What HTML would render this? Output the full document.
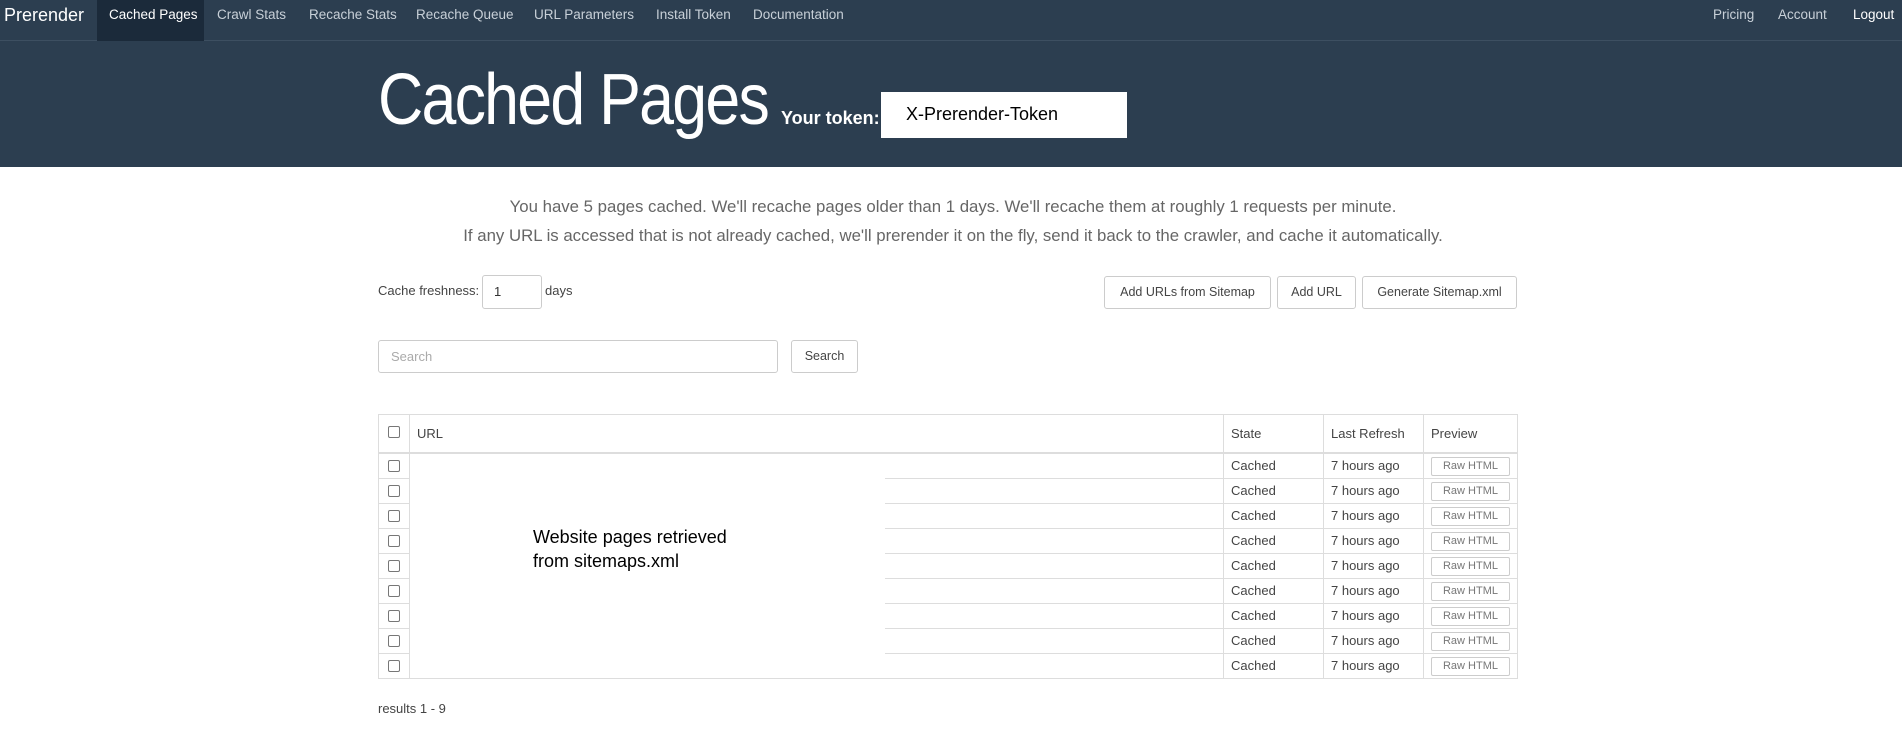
<!DOCTYPE html>
<html><head><meta charset="utf-8"><style>
*{box-sizing:border-box;margin:0;padding:0}
body{width:1902px;height:752px;background:#fff;font-family:"Liberation Sans",sans-serif;position:relative;overflow:hidden;color:#333}
.abs{position:absolute;white-space:nowrap}
.nav{position:absolute;left:0;top:0;width:1902px;height:41px;background:#2c3e50;border-bottom:1px solid #3d4f61}
.nav span{position:absolute;top:0;line-height:30px;font-size:13.5px;color:#c8d0d8}
.hero{position:absolute;left:0;top:41px;width:1902px;height:126px;background:#2c3e50}
.btn{position:absolute;border:1px solid #ccc;border-radius:3px;background:#fff;font-size:12.5px;color:#444;text-align:center;line-height:31px}
.hl{position:absolute;height:1px;background:#ddd}
.vl{position:absolute;width:1px;background:#ddd}
.cb{position:absolute;width:12px;height:12px;border:1px solid #777;border-radius:2px;background:#fff}
.cell{position:absolute;font-size:13px;color:#444;line-height:25px}
.raw{position:absolute;width:79px;height:19px;border:1px solid #ccc;border-radius:2px;font-size:11px;color:#777;text-align:center;line-height:17px}
</style></head><body>
<div class="nav">
<span style="left:4px;font-size:18px;color:#fff">Prerender</span>
<div style="position:absolute;left:97px;top:0;width:107px;height:41px;background:#1b2a3a"></div>
<span style="left:109px;color:#fff">Cached Pages</span>
<span style="left:217px">Crawl Stats</span>
<span style="left:309px">Recache Stats</span>
<span style="left:416px">Recache Queue</span>
<span style="left:534px">URL Parameters</span>
<span style="left:656px">Install Token</span>
<span style="left:753px">Documentation</span>
<span style="left:1713px">Pricing</span>
<span style="left:1778px">Account</span>
<span style="left:1853px;color:#fff">Logout</span>
</div>
<div class="hero"></div>
<div class="abs" style="left:378px;top:58px;font-size:72px;color:#fff;letter-spacing:-2px;line-height:84px;transform:scaleX(0.87);transform-origin:0 0">Cached Pages</div>
<div class="abs" style="left:781px;top:108px;font-size:18px;color:#fff;font-weight:bold">Your token:</div>
<div class="abs" style="left:881px;top:92px;width:246px;height:46px;background:#fff"></div>
<div class="abs" style="left:906px;top:104px;font-size:18px;color:#000">X-Prerender-Token</div>
<div class="abs" style="left:0;width:1902px;text-align:center;top:192px;font-size:16.8px;color:#666;line-height:29px;padding-left:4px">You have 5 pages cached. We'll recache pages older than 1 days. We'll recache them at roughly 1 requests per minute.<br>If any URL is accessed that is not already cached, we'll prerender it on the fly, send it back to the crawler, and cache it automatically.</div>
<div class="abs" style="left:378px;top:283px;font-size:13px;color:#444">Cache freshness:</div>
<div class="abs" style="left:482px;top:275px;width:60px;height:34px;border:1px solid #ccc;border-radius:3px;font-size:13px;padding:8px 11px">1</div>
<div class="abs" style="left:545px;top:283px;font-size:13px;color:#444">days</div>
<div class="btn" style="left:1104px;top:276px;width:167px;height:33px">Add URLs from Sitemap</div>
<div class="btn" style="left:1277px;top:276px;width:79px;height:33px">Add URL</div>
<div class="btn" style="left:1362px;top:276px;width:155px;height:33px">Generate Sitemap.xml</div>
<div class="abs" style="left:378px;top:340px;width:400px;height:33px;border:1px solid #ccc;border-radius:3px;font-size:13px;color:#aaa;padding:8px 12px">Search</div>
<div class="btn" style="left:791px;top:340px;width:67px;height:33px">Search</div>
<div class="hl" style="left:378px;top:414px;width:1139px"></div>
<div class="hl" style="left:378px;top:452px;width:1139px;height:2px"></div>
<div class="hl" style="left:378px;top:478px;width:1139px"></div>
<div class="hl" style="left:378px;top:503px;width:1139px"></div>
<div class="hl" style="left:378px;top:528px;width:1139px"></div>
<div class="hl" style="left:378px;top:553px;width:1139px"></div>
<div class="hl" style="left:378px;top:578px;width:1139px"></div>
<div class="hl" style="left:378px;top:603px;width:1139px"></div>
<div class="hl" style="left:378px;top:628px;width:1139px"></div>
<div class="hl" style="left:378px;top:653px;width:1139px"></div>
<div class="hl" style="left:378px;top:678px;width:1139px"></div>
<div class="vl" style="left:378px;top:414px;height:265px"></div>
<div class="vl" style="left:409px;top:414px;height:265px"></div>
<div class="vl" style="left:1223px;top:414px;height:265px"></div>
<div class="vl" style="left:1323px;top:414px;height:265px"></div>
<div class="vl" style="left:1423px;top:414px;height:265px"></div>
<div class="vl" style="left:1517px;top:414px;height:265px"></div>
<div class="abs" style="left:410px;top:454px;width:475px;height:224px;background:#fff"></div>
<div class="cb" style="left:388px;top:426px"></div>
<div class="cell" style="left:417px;top:421px">URL</div>
<div class="cell" style="left:1231px;top:421px">State</div>
<div class="cell" style="left:1331px;top:421px">Last Refresh</div>
<div class="cell" style="left:1431px;top:421px">Preview</div>
<div id="rows"></div>
<div class="abs" style="left:533px;top:525px;font-size:18px;color:#000;line-height:24px">Website pages retrieved<br>from sitemaps.xml</div>
<div class="abs" style="left:378px;top:701px;font-size:13px;color:#444">results 1 - 9</div>
<script>
var h='';for(var i=0;i<9;i++){var t=454+i*25;
h+='<div class="cb" style="left:388px;top:'+(t+6)+'px"></div><div class="cell" style="left:1231px;top:'+(t-1)+'px">Cached</div><div class="cell" style="left:1331px;top:'+(t-1)+'px">7 hours ago</div><div class="raw" style="left:1431px;top:'+(t+3)+'px">Raw HTML</div>';}
document.getElementById('rows').innerHTML=h;
</script>
</body></html>
